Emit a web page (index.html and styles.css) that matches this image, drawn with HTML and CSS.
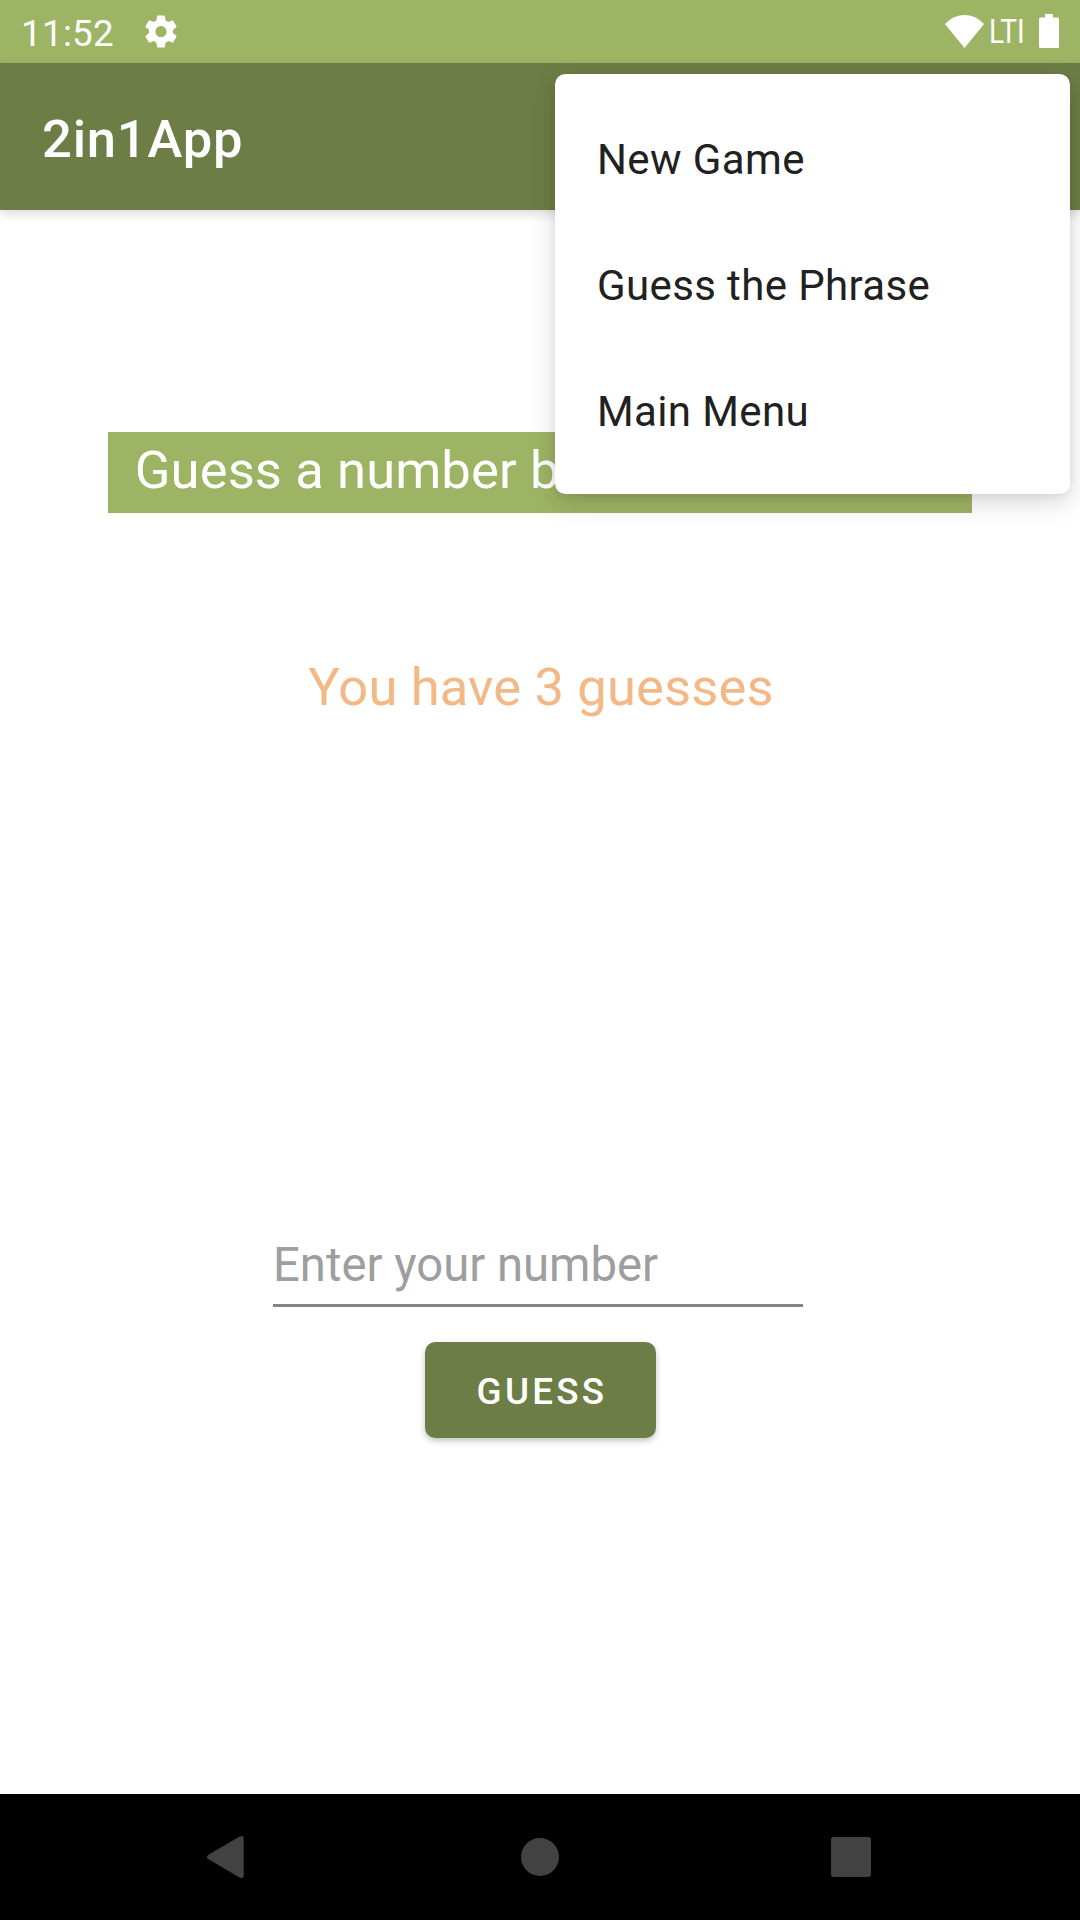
FILE: index.html
```html
<!DOCTYPE html>
<html lang="en">
<head>
<meta charset="utf-8">
<title>2in1App</title>
<link rel="stylesheet" href="styles.css">
</head>
<body>
<div class="screen">
  <header class="status-bar">
    <span class="clock">11:52</span>
    <svg class="gear" viewBox="2 2 20 20"><path fill="#fff" d="M19.43 12.98c.04-.32.07-.64.07-.98s-.03-.66-.07-.98l2.11-1.65c.19-.15.24-.42.12-.64l-2-3.46c-.12-.22-.39-.3-.61-.22l-2.49 1c-.52-.4-1.08-.73-1.69-.98l-.38-2.65C14.46 2.18 14.25 2 14 2h-4c-.25 0-.46.18-.49.42l-.38 2.65c-.61.25-1.17.59-1.69.98l-2.49-1c-.23-.09-.49 0-.61.22l-2 3.46c-.13.22-.07.49.12.64l2.11 1.65c-.04.32-.07.65-.07.98s.03.66.07.98l-2.11 1.65c-.19.15-.24.42-.12.64l2 3.46c.12.22.39.3.61.22l2.49-1c.52.4 1.08.73 1.69.98l.38 2.65c.03.24.24.42.49.42h4c.25 0 .46-.18.49-.42l.38-2.65c.61-.25 1.17-.59 1.69-.98l2.49 1c.23.09.49 0 .61-.22l2-3.46c.12-.22.07-.49-.12-.64l-2.11-1.65zM12 15.5c-1.93 0-3.5-1.57-3.5-3.5s1.57-3.5 3.5-3.5 3.5 1.57 3.5 3.5-1.57 3.5-3.5 3.5z"/></svg>
    <div class="indicators">
      <svg class="wifi" viewBox="0 0 39 33"><path fill="#fff" d="M19.500 33L0 9Q8.500 0 19.500 0T39 9Z"/></svg>
      <span class="network">LTI</span>
      <svg class="battery" viewBox="0 0 20 34"><path fill="#fff" d="M6 0h8v3.500h4.500q1.500 0 1.500 1.500v27.500q0 1.500-1.500 1.500h-17q-1.500 0-1.500-1.500v-27.500q0-1.500 1.500-1.500h4.500z"/></svg>
    </div>
  </header>
  <div class="app-bar"><h1 class="title">2in1App</h1></div>
  <main class="content">
    <p class="prompt">Guess a number between 1 and 10</p>
    <p class="remaining">You have 3 guesses</p>
    <input class="number" type="text" placeholder="Enter your number">
    <button class="guess" type="button">GUESS</button>
  </main>
  <nav class="nav-bar">
    <svg class="nav-icon" viewBox="0 0 44 44"><path fill="#424242" d="M1.600 20.300L34 1.300Q37.700 0 37.700 3V41Q37.700 44 34 42.700L1.600 23.700Q0 22 1.600 20.300Z"/></svg>
    <svg class="nav-icon" viewBox="0 0 44 44"><circle cx="22" cy="22" r="19" fill="#424242"/></svg>
    <svg class="nav-icon" viewBox="0 0 44 44"><rect x="2" y="2" width="40" height="40" rx="3" fill="#424242"/></svg>
  </nav>
  <ul class="menu">
    <li class="menu-item">New Game</li>
    <li class="menu-item">Guess the Phrase</li>
    <li class="menu-item">Main Menu</li>
  </ul>
</div>
</body>
</html>
```
FILE: styles.css
```css
* { box-sizing: border-box; margin: 0; padding: 0; }
body { font-family: Roboto, "Liberation Sans", sans-serif; background: #fff; }
.screen { position: relative; display: flex; flex-direction: column; width: 1080px; height: 1920px; overflow: hidden; }
.status-bar { display: flex; align-items: center; height: 63px; padding: 0 21px; background: #9eb465; color: #fff; }
.clock { width: 124px; font-size: 36.75px; line-height: 43px; padding-top: 3px; letter-spacing: .3px; }
.gear { width: 32px; height: 33px; }
.indicators { display: flex; align-items: center; margin-left: auto; }
.wifi { width: 39px; height: 33px; margin-right: 5px; }
.network { width: 50px; font-size: 33px; font-weight: 400; line-height: 40px; transform: scaleX(.85); transform-origin: left; }
.battery { width: 20px; height: 34px; margin-bottom: 2px; }
.app-bar { z-index: 1; display: flex; align-items: center; height: 147px; padding: 4px 0 0 42px; background: #6c7e45; box-shadow: 0 4px 10px rgba(0,0,0,.14); }
.title { color: #fff; font-size: 52.5px; font-weight: 500; line-height: 62px; letter-spacing: .8px; }
.content { flex: 1; display: flex; flex-direction: column; align-items: center; padding-top: 222px; }
.prompt { width: 864px; height: 81px; background: #9eb465; color: #fff; font-size: 52.5px; line-height: 76px; letter-spacing: .12px; text-align: center; white-space: nowrap; }
.remaining { margin: 143px 0 0 2px; color: #f4b886; font-size: 52.5px; line-height: 62px; letter-spacing: .15px; }
.number { width: 530px; height: 87px; margin: 502px 4px 0 0; padding-top: 5px; border: 0; border-bottom: 3px solid #858585; background: none; font: 47.25px Roboto, sans-serif; outline: 0; }
.number::placeholder { color: #9e9e9e; opacity: 1; }
.guess { width: 231px; height: 96px; margin-top: 35px; padding: 2px 0 0 4px; border: 0; border-radius: 10.5px; background: #6c7e45; color: #fff; font: 500 36.75px Roboto, sans-serif; letter-spacing: .0893em; box-shadow: 0 3px 6px rgba(0,0,0,.24); }
.nav-bar { display: flex; align-items: center; justify-content: space-between; height: 126px; padding: 0 207px; background: #000; }
.nav-icon { width: 44px; height: 44px; }
.nav-icon:first-child { margin-left: -1px; margin-right: 1px; }
.menu { position: absolute; z-index: 2; top: 74px; left: 555px; width: 515px; height: 420px; padding: 22px 0 20px; border-radius: 10.5px; background: #fff; list-style: none; box-shadow: 0 8px 26px rgba(0,0,0,.16), 0 2px 8px rgba(0,0,0,.06); }
.menu-item { display: flex; align-items: center; height: 126px; padding-left: 42px; color: #212121; font-size: 42px; letter-spacing: .009em; }
```
